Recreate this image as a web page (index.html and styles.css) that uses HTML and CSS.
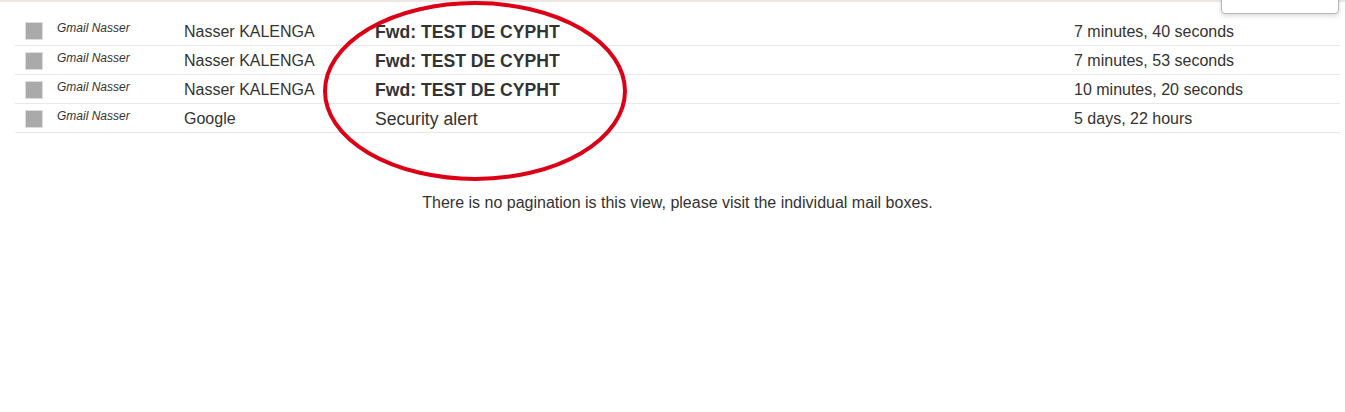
FILE: index.html
```html
<!DOCTYPE html>
<html>
<head>
<meta charset="utf-8">
<link rel="stylesheet" href="styles.css">
</head>
<body>
<div class="page">
  <div class="topbar"></div>
  <div class="menu-box"></div>
  <div class="content">
    <table class="messages">
      <colgroup>
        <col class="c-check"><col class="c-source"><col class="c-from"><col class="c-subject"><col class="c-date">
      </colgroup>
      <tbody>
        <tr>
          <td class="check"><span class="box"></span></td>
          <td class="source">Gmail Nasser</td>
          <td class="from">Nasser KALENGA</td>
          <td class="subject unseen">Fwd: TEST DE CYPHT</td>
          <td class="date">7 minutes, 40 seconds</td>
        </tr>
        <tr>
          <td class="check"><span class="box"></span></td>
          <td class="source">Gmail Nasser</td>
          <td class="from">Nasser KALENGA</td>
          <td class="subject unseen">Fwd: TEST DE CYPHT</td>
          <td class="date">7 minutes, 53 seconds</td>
        </tr>
        <tr>
          <td class="check"><span class="box"></span></td>
          <td class="source">Gmail Nasser</td>
          <td class="from">Nasser KALENGA</td>
          <td class="subject unseen">Fwd: TEST DE CYPHT</td>
          <td class="date">10 minutes, 20 seconds</td>
        </tr>
        <tr>
          <td class="check"><span class="box"></span></td>
          <td class="source">Gmail Nasser</td>
          <td class="from">Google</td>
          <td class="subject">Security alert</td>
          <td class="date">5 days, 22 hours</td>
        </tr>
      </tbody>
    </table>
    <p class="note">There is no pagination is this view, please visit the individual mail boxes.</p>
  </div>
  <svg class="annotation" width="320" height="190" viewBox="0 0 320 190">
    <ellipse cx="152" cy="91" rx="150" ry="88" fill="none" stroke="#dc0016" stroke-width="4"/>
  </svg>
</div>
</body>
</html>
```

FILE: styles.css
```css
html, body {
  margin: 0;
  padding: 0;
  background: #fff;
}
body {
  font-family: "Liberation Sans", Arial, sans-serif;
  color: #333;
}
.page {
  position: relative;
  width: 1345px;
  height: 412px;
  overflow: hidden;
}
.topbar {
  height: 2px;
  background: #eee8e4;
}
.menu-box {
  position: absolute;
  left: 1221px;
  top: -10px;
  width: 116px;
  height: 22px;
  background: #fff;
  border: 1px solid #b5b5b5;
  border-radius: 4px;
  box-shadow: 0 2px 5px rgba(0, 0, 0, 0.15);
}
.content {
  padding: 14px 5px 0 15px;
}
.messages {
  width: 1325px;
  border-collapse: collapse;
  table-layout: fixed;
}
.c-check { width: 35px; }
.c-source { width: 127px; }
.c-from { width: 191px; }
.c-subject { width: 699px; }
.c-date { width: 273px; }
.messages td {
  height: 28px;
  padding: 3px 0 0 7px;
  box-sizing: border-box;
  border-bottom: 1px solid #e8e8e8;
  vertical-align: middle;
  font-size: 16px;
  line-height: 20px;
  white-space: nowrap;
  overflow: hidden;
}
.messages tr {
  height: 29px;
}
.messages td.check {
  padding: 2px 0 0 10px;
}
.box {
  display: block;
  width: 16px;
  height: 16px;
  background: #aaa;
  border: 1px solid #ddd;
}
.messages td.source {
  font-size: 12px;
  font-style: italic;
  vertical-align: top;
  padding-top: 5px;
  line-height: 14px;
}
.messages td.subject {
  font-size: 17.6px;
}
.unseen {
  font-weight: bold;
}
.note {
  margin: 61px 0 0;
  text-align: center;
  font-size: 16px;
}
.annotation {
  position: absolute;
  left: 323px;
  top: 0;
}
```
